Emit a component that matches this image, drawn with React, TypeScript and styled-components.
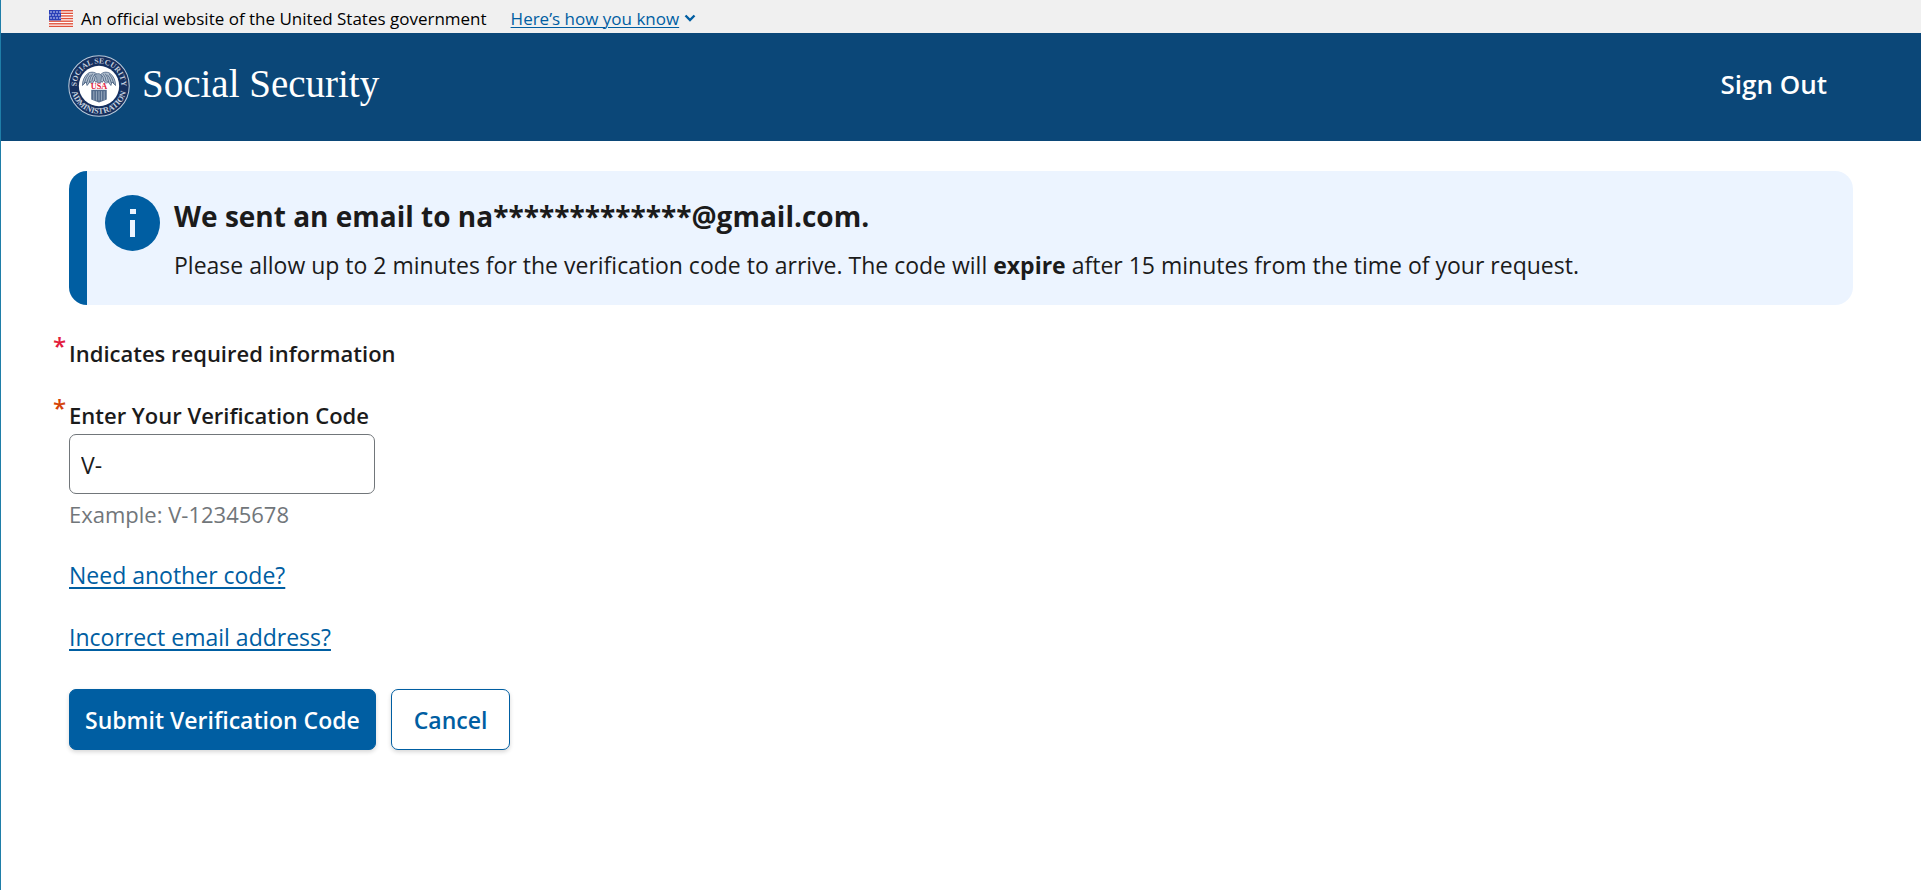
import React from "react";
import styled, { createGlobalStyle } from "styled-components";

const color = {
  ink: "#1b1b1b",
  blue: "#005ea2",
  navy: "#0b4778",
  pale: "#ecf4ff",
  gray: "#71767a",
};

const GlobalStyle = createGlobalStyle`
  *, *::before, *::after { box-sizing: border-box; }
  body {
    margin: 0;
    background: #ffffff;
    color: ${color.ink};
    font-family: "Segoe UI", "Open Sans", "Noto Sans", sans-serif;
    font-size: 22px;
    line-height: 32px;
  }
  h2, p { margin: 0; }
`;

const Page = styled.div`
  min-height: 100vh;
  padding-right: 2px;
  border-left: 1px solid #1f7ea8;
`;

const Banner = styled.section`
  display: flex;
  align-items: center;
  height: 33px;
  padding: 4px 48px 0;
  background: #f0f0f0;
  color: #000000;
  font-size: 17px;
  line-height: 24px;
`;

const BannerText = styled.p`
  margin: 0 24px 0 8px;
`;

const BannerLink = styled.button`
  display: flex;
  align-items: center;
  gap: 5px;
  padding: 0;
  border: 0;
  background: none;
  color: ${color.blue};
  font: inherit;
  cursor: pointer;

  span {
    text-decoration: underline;
    text-decoration-thickness: 1px;
    text-underline-offset: 2px;
  }
`;

const Header = styled.header`
  display: flex;
  align-items: center;
  justify-content: space-between;
  height: 108px;
  padding: 0 94px 2px 67px;
  background: ${color.navy};
`;

const Brand = styled.a`
  display: flex;
  align-items: center;
  gap: 12px;
  color: #ffffff;
  font-family: Georgia, "Liberation Serif", serif;
  font-size: 39px;
  line-height: 48px;
  text-decoration: none;
`;

const BrandName = styled.span`
  padding-bottom: 4px;
`;

const SignOut = styled.button`
  padding: 0 0 4px;
  border: 0;
  background: none;
  color: #ffffff;
  font: inherit;
  font-size: 26px;
  font-weight: 600;
  cursor: pointer;
`;

const Main = styled.main`
  padding: 30px 68px 48px;
`;

const Alert = styled.section`
  display: flex;
  gap: 14px;
  padding: 24px 24px 18px 18px;
  border-left: 18px solid ${color.blue};
  border-radius: 18px;
  background: ${color.pale};
`;

const AlertTitle = styled.h2`
  font-size: 28px;
  font-weight: 700;
  line-height: 42px;
`;

const AlertText = styled.p`
  padding-top: 12px;
  padding-bottom: 6px;
  font-size: 23px;
`;

const Form = styled.form`
  display: flex;
  flex-direction: column;
  align-items: flex-start;
  gap: 30px;
  padding-top: 32px;
`;

const Required = styled.p`
  display: flex;
  font-weight: 600;
`;

const Field = styled.div`
  display: flex;
  flex-direction: column;
`;

const Label = styled.label`
  display: flex;
  font-weight: 600;
`;

const Star = styled.span<{ $color: string }>`
  width: 16px;
  margin-left: -16px;
  color: ${(p) => p.$color};
  font-size: 24px;
  line-height: 18px;
`;

const Input = styled.input`
  width: 306px;
  height: 60px;
  margin-top: 3px;
  padding: 2px 11px 0;
  border: 1px solid ${color.gray};
  border-radius: 7px;
  background: #ffffff;
  color: ${color.ink};
  font: inherit;
  font-size: 23px;
  outline: none;
`;

const Hint = styled.span`
  padding-top: 5px;
  color: ${color.gray};
  line-height: 30px;
`;

const TextLink = styled.a`
  color: ${color.blue};
  font-size: 23px;
  text-decoration: underline;
  text-decoration-thickness: 2px;
  text-underline-offset: 3px;
`;

const Actions = styled.div`
  display: flex;
  gap: 15px;
  padding-top: 6px;
`;

const Button = styled.button<{ $primary?: boolean }>`
  height: 61px;
  padding: 0 ${(p) => (p.$primary ? 15 : 22)}px;
  border: 1px solid ${color.blue};
  border-radius: 7px;
  background: ${(p) => (p.$primary ? color.blue : "#ffffff")};
  color: ${(p) => (p.$primary ? "#ffffff" : color.blue)};
  box-shadow: 0 2px 4px rgba(0, 0, 0, 0.16);
  font: inherit;
  font-size: 23px;
  font-weight: 600;
  cursor: pointer;
`;

function Flag() {
  const stripes = [0, 1, 2, 3, 4, 5, 6];
  const rows = [2, 5, 8];
  return (
    <svg width="24" height="17" viewBox="0 0 24 17" aria-hidden="true">
      <rect width="24" height="17" fill="#ffffff" />
      {stripes.map((i) => (
        <rect key={i} y={i * 2.62} width="24" height="1.4" fill="#e0513b" />
      ))}
      <rect width="12" height="10.4" fill="#2a3fb8" />
      {rows.map((y, r) =>
        [2, 5, 8, 11].map((x) => (
          <circle key={`${x}-${y}`} cx={x - (r % 2)} cy={y} r="0.8" fill="#dfe3fa" />
        ))
      )}
    </svg>
  );
}

function Chevron() {
  return (
    <svg width="12" height="9" viewBox="0 0 12 9" aria-hidden="true">
      <path d="M1.5 1.5 6 6l4.5-4.5" fill="none" stroke={color.blue} strokeWidth="2.4" />
    </svg>
  );
}

function Seal() {
  const feathers = [0, 1, 2, 3, 4];
  const wing = (
    <g>
      <path
        d="M61 41C65 33 75 31 82 36 88 41 92 49 92 59L85 52 83 59 77 51 74 57 69 49 66 53 61 48Z"
        fill="#b3c0d0"
        stroke="#3c5679"
        strokeWidth="1.5"
      />
      {feathers.map((i) => (
        <path
          key={i}
          d={`M${64 + i * 4} ${38 - (i % 3)}Q${69 + i * 4} 42 ${69 + i * 5} ${50 + i * 1.5}`}
          fill="none"
          stroke="#49617f"
          strokeWidth="1.6"
        />
      ))}
    </g>
  );
  return (
    <svg width="62" height="62" viewBox="0 0 120 120" role="img" aria-label="Social Security Administration seal">
      <defs>
        <path id="seal-top" d="M16.5 60a43.5 43.5 0 0 1 87 0" />
        <path id="seal-bottom" d="M6.5 60a53.5 53.5 0 0 0 107 0" />
      </defs>
      <circle cx="60" cy="60" r="58.5" fill="#16305f" stroke="#b9c9da" strokeWidth="2" />
      <circle cx="60" cy="60" r="39" fill="#ffffff" />
      <g fill="#c5d1df" fontFamily="Liberation Serif, serif" fontWeight="700" textAnchor="middle">
        <text fontSize="15">
          <textPath href="#seal-top" startOffset="50%">SOCIAL SECURITY</textPath>
        </text>
        <text fontSize="16">
          <textPath href="#seal-bottom" startOffset="50%">ADMINISTRATION</textPath>
        </text>
      </g>
      {wing}
      <g transform="matrix(-1 0 0 1 120 0)">{wing}</g>
      <path d="M55 43 51 39 57 36Q64 35 65 42L63 54H57Z" fill="#91a3b8" stroke="#3c5679" />
      <path d="M45 67H75V86Q68 89 60 92 52 89 45 86Z" fill="#536b8c" />
      {[49, 54, 59, 64, 69].map((x) => (
        <path key={x} d={`M${x + 1} 70V88`} stroke="#aebccd" strokeWidth="1.5" />
      ))}
      <rect x="44" y="55" width="32" height="12" fill="#ffffff" />
      <text
        x="60"
        y="66.5"
        fill="#e0203c"
        fontFamily="Liberation Serif, serif"
        fontSize="16"
        fontWeight="700"
        textAnchor="middle"
      >
        USA
      </text>
    </svg>
  );
}

const InfoBadge = styled.svg`
  flex: none;
`;

function InfoIcon() {
  return (
    <InfoBadge width="55" height="56" viewBox="0 0 55 56" aria-hidden="true">
      <ellipse cx="27.5" cy="28" rx="27.5" ry="28" fill={color.blue} />
      <path d="M25 14h6v5h-6zM25 25h5v17h-5z" fill={color.pale} />
    </InfoBadge>
  );
}

export default function App() {
  return (
    <Page>
      <GlobalStyle />
      <Banner aria-label="Official website of the United States government">
        <Flag />
        <BannerText>An official website of the United States government</BannerText>
        <BannerLink type="button">
          <span>Here’s how you know</span>
          <Chevron />
        </BannerLink>
      </Banner>
      <Header>
        <Brand href="#">
          <Seal />
          <BrandName>Social Security</BrandName>
        </Brand>
        <SignOut type="button">Sign Out</SignOut>
      </Header>
      <Main>
        <Alert>
          <InfoIcon />
          <div>
            <AlertTitle>We sent an email to na*************@gmail.com.</AlertTitle>
            <AlertText>
              Please allow up to 2 minutes for the verification code to arrive. The code will{" "}
              <strong>expire</strong> after 15 minutes from the time of your request.
            </AlertText>
          </div>
        </Alert>
        <Form onSubmit={(e) => e.preventDefault()}>
          <Required>
            <Star $color="#e31c3d">*</Star>
            Indicates required information
          </Required>
          <Field>
            <Label htmlFor="code">
              <Star $color="#d54309">*</Star>
              Enter Your Verification Code
            </Label>
            <Input id="code" type="text" defaultValue="V-" aria-describedby="code-hint" />
            <Hint id="code-hint">Example: V-12345678</Hint>
          </Field>
          <TextLink href="#">Need another code?</TextLink>
          <TextLink href="#">Incorrect email address?</TextLink>
          <Actions>
            <Button type="submit" $primary>
              Submit Verification Code
            </Button>
            <Button type="button">Cancel</Button>
          </Actions>
        </Form>
      </Main>
    </Page>
  );
}
